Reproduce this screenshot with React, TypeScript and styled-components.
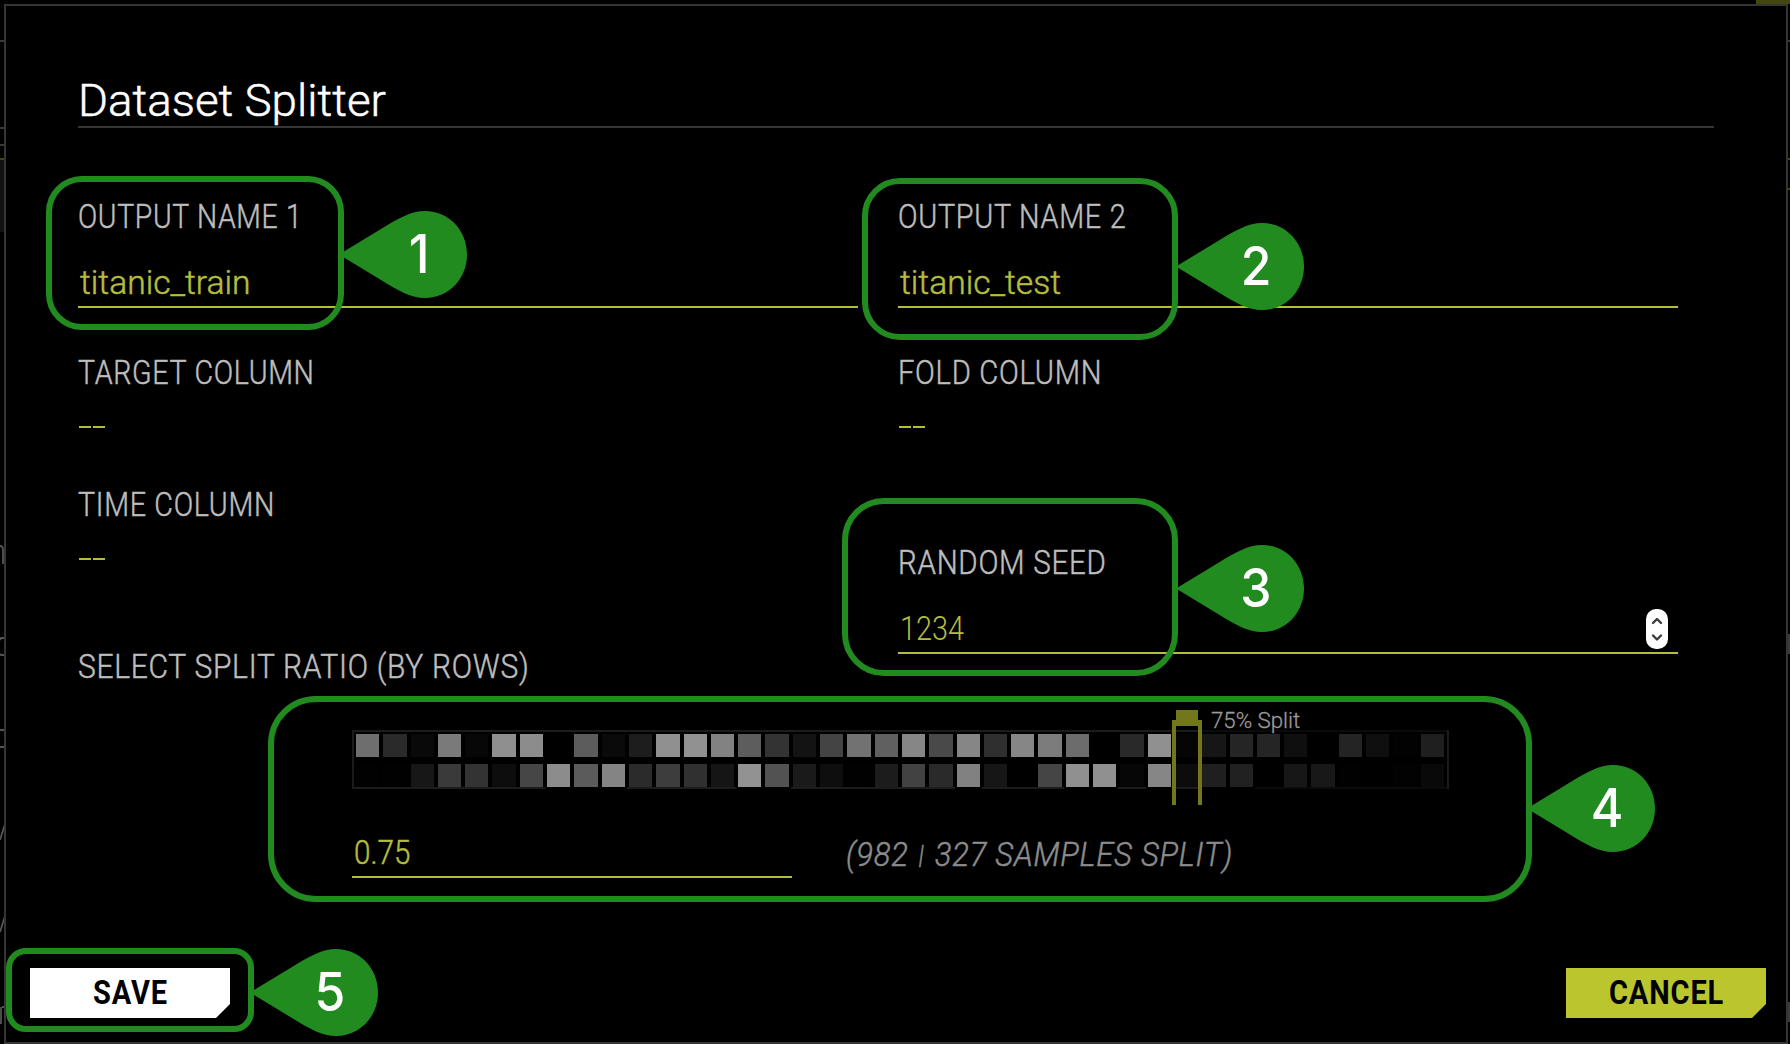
import React, { useLayoutEffect, useRef, useState } from "react";
import styled, { createGlobalStyle } from "styled-components";

const GREEN = "#228b1f";
const LIME = "#b5bd3c";

const GlobalStyle = createGlobalStyle`
  * { box-sizing: border-box; }
  html, body { margin: 0; background: #000; }
  body {
    width: 1790px;
    height: 1044px;
    overflow: hidden;
    font-family: Roboto, "Liberation Sans", sans-serif;
  }
`;

const Screen = styled.div`
  position: relative;
  width: 1790px;
  height: 1044px;
  padding: 4px 2px 0 4px;
  background: #000;
  overflow: hidden;
`;

const Backdrop = styled.svg`
  position: absolute;
  inset: 0;
`;

const Modal = styled.div`
  position: relative;
  width: 1784px;
  height: 1040px;
  border: 2px solid #353535;
  background: #000;
  display: flex;
  flex-direction: column;
`;

const Header = styled.header`
  margin: 68px 0 0 72px;
  width: 1636px;
  height: 54px;
  border-bottom: 2px solid #353535;
  color: #fff;
  font-size: 45px;
  font-weight: 300;
  -webkit-text-stroke: 0.5px currentColor;
  line-height: 54px;
`;

const Body = styled.div`
  display: flex;
  gap: 40px;
  padding: 68px 0 0 72px;
  height: 558px;
`;

const Column = styled.div`
  width: 780px;
  display: flex;
  flex-direction: column;
`;

const Label = styled.div`
  color: #bdbdbd;
  font-size: 33.8px;
  font-weight: 300;
  -webkit-text-stroke: 0.5px currentColor;
  letter-spacing: 0.8px;
  line-height: 42px;
  height: 40px;
`;

const Field = styled.div`
  flex: none;
  height: 112px;
  margin-bottom: 44px;
  display: flex;
  flex-direction: column;
  justify-content: space-between;
`;

const FieldInput = styled.div<{ $light?: boolean }>`
  display: flex;
  justify-content: space-between;
  height: 46px;
  padding-left: 2px;
  border-bottom: 2px solid ${LIME};
  color: ${LIME};
  font-size: 33.8px;
  font-weight: 300;
  -webkit-text-stroke: ${(p) => (p.$light ? 0 : 0.5)}px currentColor;
  line-height: 42px;
`;

const Picker = styled.div<{ $height: number }>`
  flex: none;
  height: ${(p) => p.$height}px;
`;

const Dashes = styled.div`
  display: flex;
  gap: 2px;
  padding: 34px 0 0 1px;
`;

const Dash = styled.span`
  width: 12px;
  height: 2px;
  background: ${LIME};
`;

const Stepper = styled.div`
  width: 22px;
  height: 40px;
  margin: 1px 10px 0 0;
  border-radius: 10px;
  background: #fff;
  display: flex;
  align-items: center;
  justify-content: center;
`;

const SplitPanel = styled.section`
  position: relative;
  width: 1097px;
  margin: 44px 0 0 346px;
`;

const HeatFrame = styled.div`
  position: relative;
  isolation: isolate;
  height: 59px;
  border: 2px solid #1c1c1c;
  display: grid;
  grid-template-columns: repeat(40, 27.31px);
  grid-template-rows: 30px 25px;
  &::before {
    content: "";
    position: absolute;
    z-index: -1;
    left: 848px;
    right: 0;
    top: -2px;
    bottom: -2px;
    background: rgba(0, 0, 0, 0.6);
  }
`;

const HeatCell = styled.span<{ $shade: string; $halo: boolean }>`
  margin: 2px 2px 0 2px;
  height: 23px;
  background: #${(p) => p.$shade}${(p) => p.$shade}${(p) => p.$shade};
  box-shadow: ${(p) => (p.$halo ? "0 0 0 2px #000" : "none")};
`;

const Handle = styled.div`
  position: absolute;
  left: 820px;
  top: -10px;
  width: 30px;
  height: 85px;
  border: 4px solid #72771b;
  border-top-width: 6px;
  border-bottom: 0;
  &::before {
    content: "";
    position: absolute;
    left: 0;
    top: -16px;
    width: 22px;
    height: 10px;
    background: #72771b;
  }
`;

const SplitTag = styled.div`
  position: absolute;
  left: 859px;
  top: -24px;
  color: #9a9a9a;
  font-size: 22.5px;
  font-weight: 300;
  -webkit-text-stroke: 0.3px currentColor;
  line-height: 28px;
`;

const RatioRow = styled.div`
  display: flex;
  gap: 54px;
  padding-top: 43px;
`;

const RatioInput = styled(FieldInput)`
  width: 440px;
`;

const Samples = styled.div`
  color: #8c8c8c;
  font-size: 33.8px;
  font-style: italic;
  font-weight: 300;
  -webkit-text-stroke: 0.5px currentColor;
  letter-spacing: 0.8px;
  line-height: 42px;
  padding-top: 2px;
`;

const Bar = styled.span`
  position: relative;
  top: -3px;
  font-size: 26px;
  line-height: 1;
  padding: 0 2px;
`;

const Footer = styled.footer`
  display: flex;
  justify-content: space-between;
  margin-top: auto;
  padding: 0 20px 24px 24px;
`;

const Button = styled.button<{ $bg: string }>`
  width: 200px;
  height: 50px;
  padding: 0;
  border: 0;
  background: ${(p) => p.$bg};
  clip-path: polygon(0 0, 100% 0, 100% 36px, 186px 100%, 0 100%);
  color: #000;
  font-family: inherit;
  font-size: 32.5px;
  font-weight: 700;
  letter-spacing: 1px;
  line-height: 50px;
`;

const FitBox = styled.span`
  display: inline-block;
  text-align: left;
  white-space: nowrap;
`;

const FitInner = styled.span`
  display: inline-block;
  transform-origin: 0 50%;
`;

const Outline = styled.div<{ $x: number; $y: number; $w: number; $h: number; $r: number }>`
  position: absolute;
  left: ${(p) => p.$x}px;
  top: ${(p) => p.$y}px;
  width: ${(p) => p.$w}px;
  height: ${(p) => p.$h}px;
  border: 6px solid ${GREEN};
  border-radius: ${(p) => p.$r}px;
`;

const Pin = styled.div<{ $x: number; $y: number }>`
  position: absolute;
  left: ${(p) => p.$x}px;
  top: ${(p) => p.$y}px;
  width: 126px;
  height: 87px;
  padding-left: 48px;
  color: #fff;
  font-family: Inter, "Liberation Sans", sans-serif;
  font-size: 53px;
  font-weight: 500;
  line-height: 87px;
`;

const PinShape = styled.svg`
  position: absolute;
  inset: 0;
  overflow: visible;
`;

const PinNumber = styled.span`
  display: block;
  position: relative;
  width: 60px;
  text-align: center;
  transform: scaleX(0.94);
`;

/** Condenses a line of text horizontally so that it takes the given width. */
function Fit({ width, children }: { width: number; children: React.ReactNode }) {
  const ref = useRef<HTMLSpanElement>(null);
  const [scale, setScale] = useState(1);
  useLayoutEffect(() => {
    if (ref.current) setScale(width / ref.current.offsetWidth);
  }, [width]);
  return (
    <FitBox style={{ width }}>
      <FitInner ref={ref} style={{ transform: `scaleX(${scale})` }}>{children}</FitInner>
    </FitBox>
  );
}

const ROW_A = "6e 2a 09 7a 07 8f 8c 00 5c 0a 1d 90 91 82 5d 33 13 44 72 60 86 49 86 2f 86 7c 6c 00 29 90 05 16 25 25 0f 00 24 0f 02 1f".split(" ");
const ROW_B = "01 01 17 3a 33 0d 46 8c 5b 84 2b 3d 30 15 92 52 1a 0e 01 1c 42 2a 81 16 00 45 90 90 06 86 0c 1f 21 00 17 18 01 00 02 09".split(" ");

// Lower cells whose dark surround cuts the frame's bottom line.
const HALO = new Set([7, 8, 9, 14, 15, 22, 26, 27, 29, 31, 32].map((i) => i + 40));

const OUTLINES = [
  { x: 46, y: 176, w: 298, h: 154, r: 36 },
  { x: 862, y: 178, w: 316, h: 162, r: 38 },
  { x: 842, y: 498, w: 336, h: 178, r: 42 },
  { x: 268, y: 696, w: 1264, h: 206, r: 48 },
  { x: 6, y: 948, w: 248, h: 84, r: 20 },
];

const PINS = [
  { x: 341, y: 211 },
  { x: 1178, y: 223 },
  { x: 1178, y: 545 },
  { x: 1529, y: 765 },
  { x: 252, y: 949 },
];

function ColumnPicker({ label, width, height }: { label: string; width: number; height: number }) {
  return (
    <Picker $height={height}>
      <Label><Fit width={width}>{label}</Fit></Label>
      <Dashes><Dash /><Dash /></Dashes>
    </Picker>
  );
}

export default function App() {
  return (
    <Screen>
      <GlobalStyle />
      <Backdrop width="1790" height="1044" aria-hidden="true">
        <g fill="#3a3a3a">
          <rect x="0" y="40" width="4" height="2" />
          <rect x="0" y="127" width="4" height="2" />
          <rect x="0" y="144" width="4" height="2" />
          <rect x="1788" y="40" width="2" height="2" />
          <rect x="1788" y="634" width="2" height="20" />
          <rect x="1788" y="1002" width="2" height="20" />
        </g>
        <g fill="#43470f">
          <rect x="1756" y="0" width="34" height="4" />
          <rect x="0" y="158" width="4" height="2" />
          <rect x="1788" y="158" width="2" height="2" />
          <rect x="1788" y="188" width="2" height="2" />
        </g>
        <rect x="0" y="160" width="4" height="72" fill="#111" />
        <g fill="none" stroke="#555" strokeWidth="1.8">
          <path d="M0 546 Q3 546 3 550 V564" />
          <path d="M4 638 H1 L0 640 M0 654 L1 655 H4" />
          <path d="M0 730 H4 M0 747 H4" />
          <path d="M0 840 L5 824 M0 932 L5 916" />
          <path d="M1 1024 V1007 M2 1007 H4" />
        </g>
      </Backdrop>

      <Modal>
        <Header><Fit width={308}>Dataset Splitter</Fit></Header>
        <Body>
          <Column>
            <Field>
              <Label><Fit width={224}>OUTPUT NAME 1</Fit></Label>
              <FieldInput><Fit width={171}>titanic_train</Fit></FieldInput>
            </Field>
            <ColumnPicker label="TARGET COLUMN" width={237} height={132} />
            <ColumnPicker label="TIME COLUMN" width={197} height={162} />
            <Label><Fit width={451}>SELECT SPLIT RATIO (BY ROWS)</Fit></Label>
          </Column>
          <Column>
            <Field>
              <Label><Fit width={228}>OUTPUT NAME 2</Fit></Label>
              <FieldInput><Fit width={161}>titanic_test</Fit></FieldInput>
            </Field>
            <ColumnPicker label="FOLD COLUMN" width={204} height={190} />
            <Field>
              <Label><Fit width={209}>RANDOM SEED</Fit></Label>
              <FieldInput $light>
                <Fit width={64}>1234</Fit>
                <Stepper>
                  <svg width="12" height="26" fill="none" stroke="#3c3c3c" strokeWidth="2.4" strokeLinecap="round" strokeLinejoin="round">
                    <path d="M2 7 L6 3 L10 7 M2 19.5 L6 23.5 L10 19.5" />
                  </svg>
                </Stepper>
              </FieldInput>
            </Field>
          </Column>
        </Body>

        <SplitPanel>
          <HeatFrame>
            {[...ROW_A, ...ROW_B].map((shade, i) => (
              <HeatCell key={i} $shade={shade} $halo={HALO.has(i)} />
            ))}
          </HeatFrame>
          <Handle />
          <SplitTag><Fit width={89}>75% Split</Fit></SplitTag>
          <RatioRow>
            <RatioInput><Fit width={56}>0.75</Fit></RatioInput>
            <Samples><Fit width={387}>(982 <Bar>|</Bar> 327 SAMPLES SPLIT)</Fit></Samples>
          </RatioRow>
        </SplitPanel>

        <Footer>
          <Button $bg="#fff"><Fit width={75}>SAVE</Fit></Button>
          <Button $bg="#bbc52e"><Fit width={115}>CANCEL</Fit></Button>
        </Footer>
      </Modal>

      {OUTLINES.map((o, i) => <Outline key={i} $x={o.x} $y={o.y} $w={o.w} $h={o.h} $r={o.r} />)}
      {PINS.map((p, i) => (
        <Pin key={i} $x={p.x} $y={p.y}>
          <PinShape width="126" height="87" fill={GREEN}>
            <path d="M-2 43.5 L40 18 C58 7 70 0 84 0 C108 0 126 19.5 126 43.5 C126 67.5 108 87 84 87 C70 87 58 80 40 69 Z" />
          </PinShape>
          <PinNumber>{i + 1}</PinNumber>
        </Pin>
      ))}
    </Screen>
  );
}
